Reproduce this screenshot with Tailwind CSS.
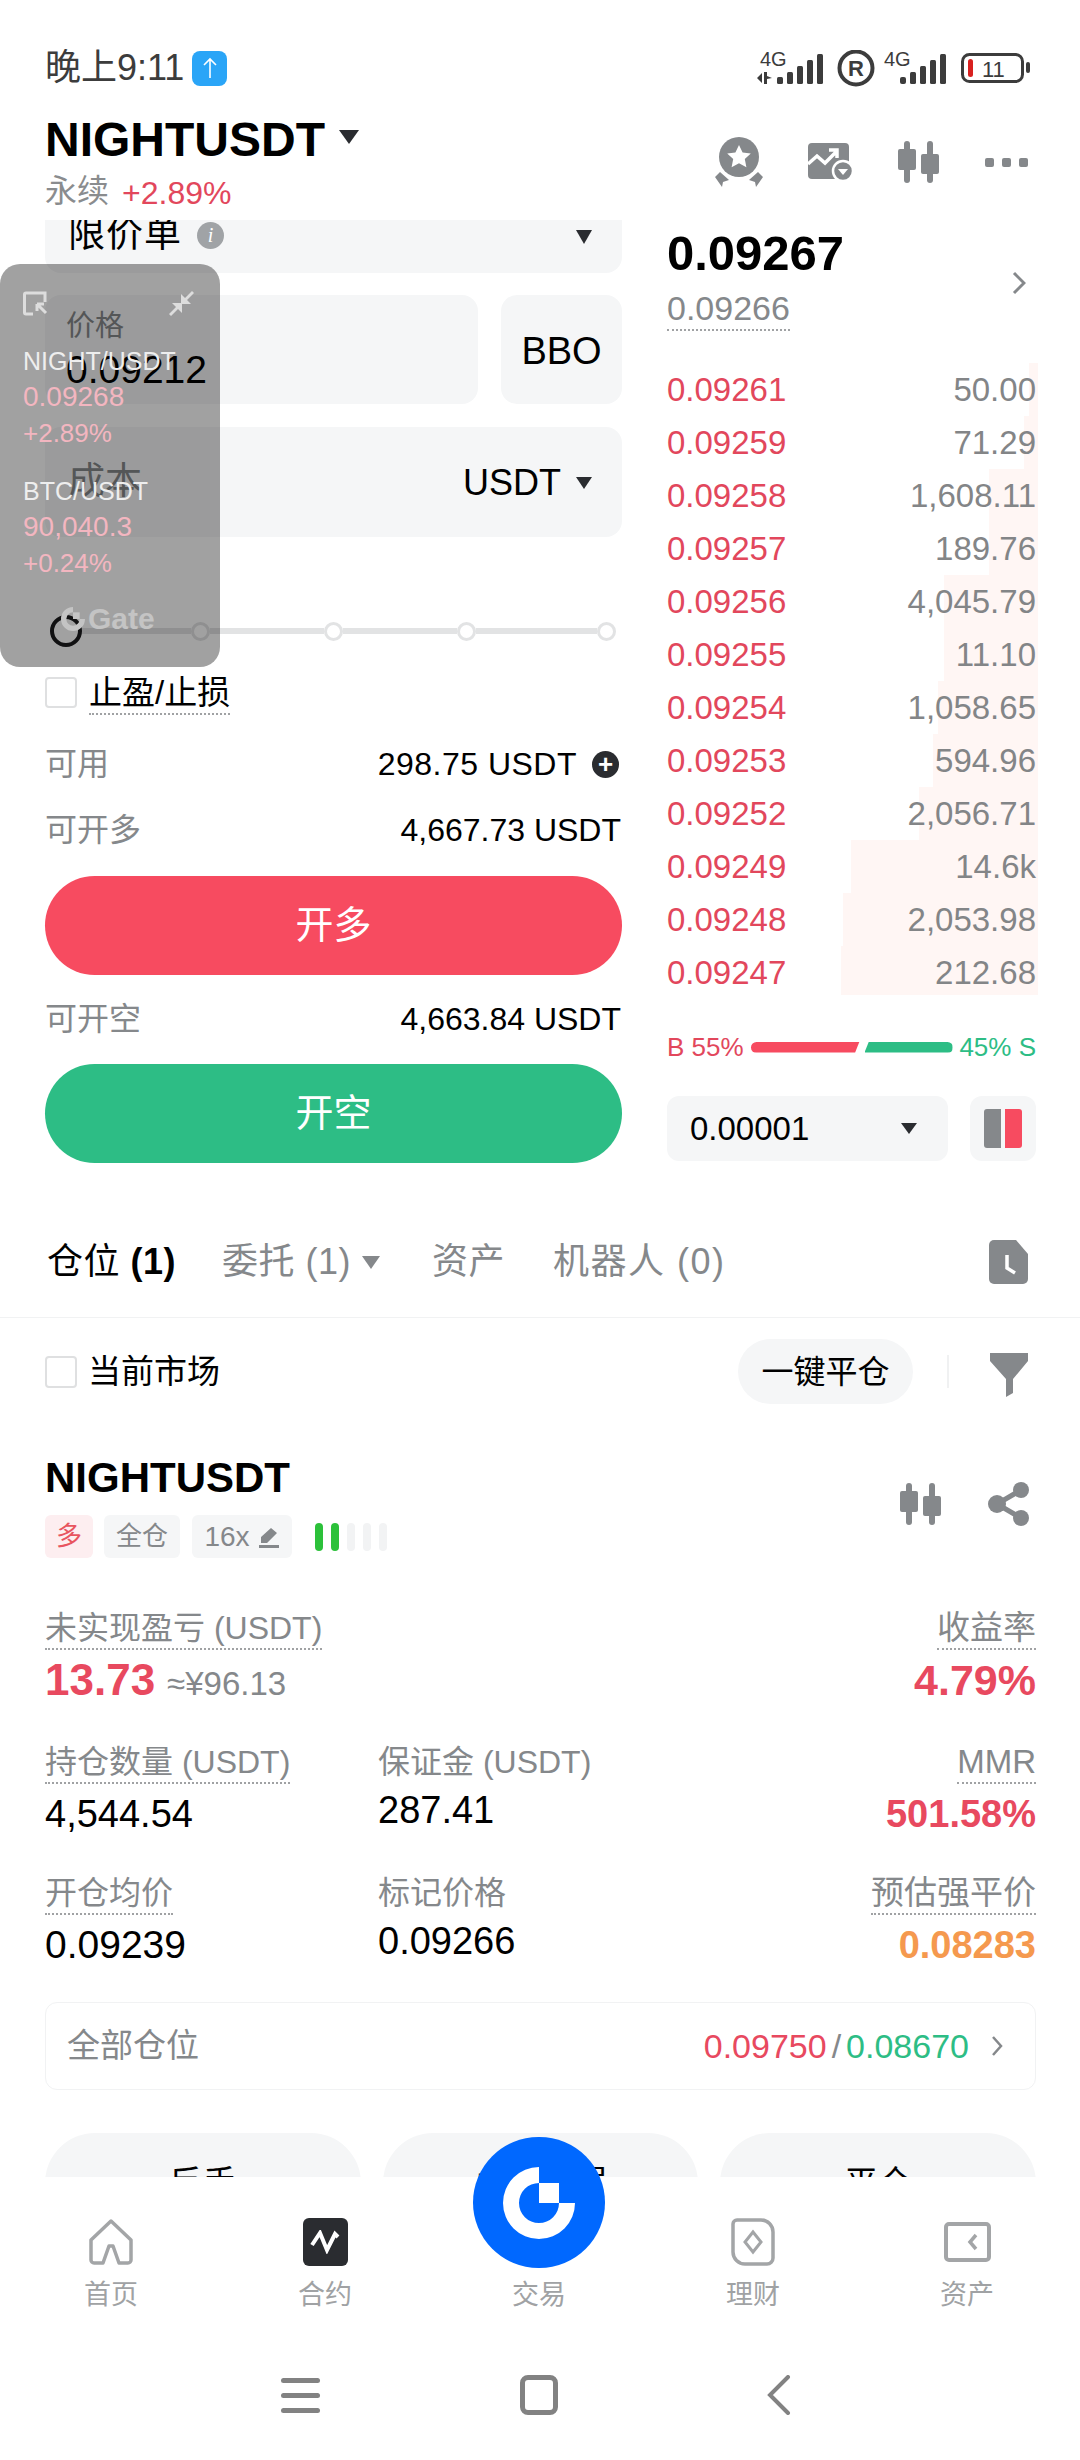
<!DOCTYPE html>
<html lang="zh-CN">
<head>
    <meta charset="UTF-8">
    <meta name="viewport" content="width=device-width, initial-scale=1.0">
    <title>NIGHTUSDT</title>
    <script src="https://cdn.jsdelivr.net/npm/@tailwindcss/browser@4"></script>
</head>
<body class="bg-white">
<div class="relative w-[1080px] h-[2460px] overflow-hidden bg-white text-black font-['Liberation_Sans','Noto_Sans_CJK_SC',sans-serif]">

    <div class="h-[2177px] overflow-hidden">
        <!-- status bar -->
        <div class="h-[110px] pt-[50px] pl-[45px] pr-[50px] flex justify-between items-start">
            <div class="flex items-center h-[36px] gap-[8px]">
                <span class="text-[36px] leading-[36px] text-[#3c3c3c]">晚上9:11</span>
                <span class="w-[35px] h-[35px] rounded-[8px] bg-[#2aa5f7] flex items-center justify-center">
                    <svg width="18" height="22" viewBox="0 0 18 22" fill="none" stroke="white" stroke-width="1.6"><path d="M9 21V2M3 8l6-6 6 6"/></svg>
                </span>
            </div>
            <svg width="276" height="40" viewBox="757 50 276 40" class="-mr-[3px]" fill="#3c3c3c">
                <text x="760" y="66" font-size="20" font-family="Liberation Sans">4G</text>
                <path d="M757 78l5-5v10zM764 72h3v4l5 2-5 1v5h-3z"/>
                <rect x="777" y="77" width="6" height="7" rx="1.5"/><rect x="787" y="72" width="6" height="12" rx="1.5"/><rect x="797" y="66" width="6" height="18" rx="1.5"/><rect x="807" y="60" width="6" height="24" rx="1.5"/><rect x="817" y="54" width="6" height="30" rx="1.5"/>
                <circle cx="856" cy="68" r="16.5" fill="none" stroke="#3c3c3c" stroke-width="4"/>
                <text x="848" y="76" font-size="22" font-weight="700" font-family="Liberation Sans">R</text>
                <text x="884" y="66" font-size="20" font-family="Liberation Sans">4G</text>
                <rect x="900" y="77" width="6" height="7" rx="2"/><rect x="910" y="72" width="6" height="12" rx="1.5"/><rect x="920" y="66" width="6" height="18" rx="1.5"/><rect x="930" y="60" width="6" height="24" rx="1.5"/><rect x="940" y="54" width="6" height="30" rx="1.5"/>
                <rect x="962.5" y="54.5" width="60" height="27" rx="7" fill="none" stroke="#3c3c3c" stroke-width="3"/>
                <rect x="968" y="59" width="5" height="18" rx="2.5" fill="#d8201f"/>
                <text x="982" y="77" font-size="22" font-family="Liberation Sans">11</text>
                <rect x="1026" y="62" width="4" height="11" rx="2"/>
            </svg>
        </div>

        <!-- header -->
        <div class="h-[110px] pl-[45px] pr-[50px] pb-[10px] flex justify-between items-center">
            <div>
                <div class="flex items-center h-[60px] mt-[1px]">
                    <span class="text-[48px] leading-[60px] font-bold">NIGHTUSDT</span>
                    <svg class="ml-[14px] -mt-[6px]" width="20" height="14" viewBox="0 0 20 14"><path d="M0 0h20L10 14z" fill="#2a2c30"/></svg>
                </div>
                <div class="flex items-center h-[40px] mt-[1px]">
                    <span class="text-[32px] leading-[40px] text-[#8a8c8e]">永续</span>
                    <span class="ml-[13px] mt-[3px] text-[32px] leading-[40px] text-[#e2475c]">+2.89%</span>
                </div>
            </div>
            <div class="flex items-center gap-[46px] mt-[4px] mr-[2px]">
                <svg width="48" height="50" viewBox="0 0 48 50" fill="#85888b">
                    <circle cx="24" cy="20" r="20"/>
                    <path d="M24 8l3.6 7.5 8.2 1-6 5.6 1.6 8.1-7.4-4-7.4 4 1.6-8.1-6-5.6 8.2-1z" fill="white"/>
                    <path d="M5 35l9 8-6 2-1 5-7-10zM43 35l-9 8 6 2 1 5 7-10z"/>
                </svg>
                <svg class="-ml-[1px]" width="45" height="38" viewBox="0 0 45 38">
                    <rect x="0" y="0" width="41" height="36" rx="4" fill="#85888b"/>
                    <path d="M0 21l9-8 8 7 11-11M21 7h8v8" fill="none" stroke="white" stroke-width="3.5"/>
                    <circle cx="35" cy="28" r="10" fill="#85888b" stroke="white" stroke-width="2.5"/>
                    <path d="M30 26h10l-5 6z" fill="white"/>
                </svg>
                <svg class="-ml-[1px]" width="41" height="42" viewBox="0 0 41 42" fill="#85888b">
                    <rect x="6" y="0" width="6" height="42" rx="3"/><rect x="0" y="8" width="18" height="21" rx="2"/>
                    <rect x="29" y="0" width="6" height="42" rx="3"/><rect x="23" y="13" width="18" height="20" rx="2"/>
                </svg>
                <div class="flex gap-[8px]">
                    <span class="w-[9px] h-[9px] rounded-[2px] bg-[#85888b]"></span>
                    <span class="w-[9px] h-[9px] rounded-[2px] bg-[#85888b]"></span>
                    <span class="w-[9px] h-[9px] rounded-[2px] bg-[#85888b]"></span>
                </div>
            </div>
        </div>

        <!-- trade area -->
        <div class="h-[970px] overflow-hidden flex pl-[45px]">
            <div class="w-[577px]">
                <div class="h-[53px] rounded-b-[16px] bg-[#f5f6f7] pl-[23px] pr-[30px] flex justify-between items-start">
                    <div class="flex items-center h-[30px]">
                        <span class="text-[37px] leading-[30px] tracking-[1px]">限价单</span>
                        <span class="ml-[15px] w-[27px] h-[27px] rounded-full bg-[#a0a3a6] text-white text-[20px] italic font-['Liberation_Serif',serif] flex items-center justify-center">i</span>
                    </div>
                    <svg class="mt-[10px]" width="16" height="14" viewBox="0 0 16 14"><path d="M0 0h16L8 14z" fill="#2a2c30"/></svg>
                </div>
                <div class="mt-[22px] flex gap-[23px]">
                    <div class="w-[433px] h-[109px] rounded-[16px] bg-[#f5f6f7] pl-[21px] pt-[11px]">
                        <div class="text-[29px] leading-[40px] text-[#85888b]">价格</div>
                        <div class="text-[39px] leading-[40px] mt-[4px]">0.09212</div>
                    </div>
                    <div class="flex-1 h-[109px] pt-[3px] rounded-[16px] bg-[#f5f6f7] flex items-center justify-center text-[38px]">BBO</div>
                </div>
                <div class="mt-[23px] h-[110px] rounded-[16px] bg-[#f5f6f7] pl-[23px] pr-[30px] flex justify-between items-center">
                    <span class="text-[37px] text-[#85888b]">成本</span>
                    <div class="flex items-center gap-[15px] pt-[2px]">
                        <span class="text-[36px]">USDT</span>
                        <svg width="16" height="12" viewBox="0 0 16 12"><path d="M0 0h16L8 12z" fill="#2a2c30"/></svg>
                    </div>
                </div>
                <!-- slider -->
                <div class="mt-[78px] h-[32px] ml-[5px] flex items-center">
                    <span class="w-[32px] h-[32px] rounded-full border-[4px] border-[#1b1b1d] bg-white shrink-0"></span>
                    <span class="w-[109px] h-[6px] bg-[#e2e3e4]"></span>
                    <span class="w-[19px] h-[19px] rounded-full border-[3px] border-[#e2e3e4] bg-white shrink-0"></span>
                    <span class="w-[114px] h-[6px] bg-[#e2e3e4]"></span>
                    <span class="w-[19px] h-[19px] rounded-full border-[3px] border-[#e2e3e4] bg-white shrink-0"></span>
                    <span class="w-[114px] h-[6px] bg-[#e2e3e4]"></span>
                    <span class="w-[19px] h-[19px] rounded-full border-[3px] border-[#e2e3e4] bg-white shrink-0"></span>
                    <span class="w-[121px] h-[6px] bg-[#e2e3e4]"></span>
                    <span class="w-[19px] h-[19px] rounded-full border-[3px] border-[#e2e3e4] bg-white shrink-0"></span>
                </div>
                <div class="mt-[30px] h-[31px] flex items-start">
                    <span class="w-[32px] h-[31px] rounded-[4px] border-2 border-[#dfe0e1]"></span>
                    <span class="ml-[12px] text-[33px] leading-[36px] -mt-[2px] border-b-2 border-dotted border-[#a0a2a4] pb-[2px]">止盈/止损</span>
                </div>
                <div class="mt-[36px] h-[40px] flex justify-between items-center">
                    <span class="text-[32px] text-[#85888b]">可用</span>
                    <div class="flex items-center gap-[15px] pr-[3px]">
                        <span class="text-[32px] tracking-[0.5px]">298.75 USDT</span>
                        <span class="w-[27px] h-[27px] rounded-full bg-[#2a2c30] relative flex items-center justify-center text-white text-[26px] font-bold leading-none">+</span>
                    </div>
                </div>
                <div class="mt-[26px] h-[40px] flex justify-between items-center">
                    <span class="text-[32px] text-[#85888b]">可开多</span>
                    <span class="text-[32px] pr-[1px]">4,667.73 USDT</span>
                </div>
                <div class="mt-[26px] h-[99px] rounded-full bg-[#f74b60] flex items-center justify-center text-white text-[38px]">开多</div>
                <div class="mt-[24px] h-[40px] flex justify-between items-center">
                    <span class="text-[32px] text-[#85888b]">可开空</span>
                    <span class="text-[32px] pr-[1px]">4,663.84 USDT</span>
                </div>
                <div class="mt-[25px] h-[99px] rounded-full bg-[#2dbd85] flex items-center justify-center text-white text-[38px]">开空</div>
            </div>

            <!-- order book -->
            <div class="ml-[45px] w-[369px]">
                <div class="mt-[7px] h-[105px] flex justify-between items-center">
                    <div>
                        <div class="text-[49px] leading-[50px] font-bold">0.09267</div>
                        <div class="inline-block mt-[9px] text-[34px] leading-[42px] text-[#85888b] border-b-2 border-dotted border-[#a0a2a4]">0.09266</div>
                    </div>
                    <svg class="mr-[10px] mt-[6px]" width="14" height="24" viewBox="0 0 14 24" fill="none" stroke="#85888b" stroke-width="3"><path d="M2 2l10 10L2 22"/></svg>
                </div>
                <div class="mt-[31px] text-[33px] leading-[53px]">
                    <div class="relative h-[53px] flex justify-between"><span class="absolute right-[-2px] inset-y-0 bg-[#fff6f4]" style="width:9px"></span><span class="relative text-[#e2475c]">0.09261</span><span class="relative text-[#838587]">50.00</span></div>
                    <div class="relative h-[53px] flex justify-between"><span class="absolute right-[-2px] inset-y-0 bg-[#fff6f4]" style="width:14px"></span><span class="relative text-[#e2475c]">0.09259</span><span class="relative text-[#838587]">71.29</span></div>
                    <div class="relative h-[53px] flex justify-between"><span class="absolute right-[-2px] inset-y-0 bg-[#fff6f4]" style="width:49px"></span><span class="relative text-[#e2475c]">0.09258</span><span class="relative text-[#838587]">1,608.11</span></div>
                    <div class="relative h-[53px] flex justify-between"><span class="absolute right-[-2px] inset-y-0 bg-[#fff6f4]" style="width:49px"></span><span class="relative text-[#e2475c]">0.09257</span><span class="relative text-[#838587]">189.76</span></div>
                    <div class="relative h-[53px] flex justify-between"><span class="absolute right-[-2px] inset-y-0 bg-[#fff6f4]" style="width:94px"></span><span class="relative text-[#e2475c]">0.09256</span><span class="relative text-[#838587]">4,045.79</span></div>
                    <div class="relative h-[53px] flex justify-between"><span class="absolute right-[-2px] inset-y-0 bg-[#fff6f4]" style="width:94px"></span><span class="relative text-[#e2475c]">0.09255</span><span class="relative text-[#838587]">11.10</span></div>
                    <div class="relative h-[53px] flex justify-between"><span class="absolute right-[-2px] inset-y-0 bg-[#fff6f4]" style="width:100px"></span><span class="relative text-[#e2475c]">0.09254</span><span class="relative text-[#838587]">1,058.65</span></div>
                    <div class="relative h-[53px] flex justify-between"><span class="absolute right-[-2px] inset-y-0 bg-[#fff6f4]" style="width:105px"></span><span class="relative text-[#e2475c]">0.09253</span><span class="relative text-[#838587]">594.96</span></div>
                    <div class="relative h-[53px] flex justify-between"><span class="absolute right-[-2px] inset-y-0 bg-[#fff6f4]" style="width:119px"></span><span class="relative text-[#e2475c]">0.09252</span><span class="relative text-[#838587]">2,056.71</span></div>
                    <div class="relative h-[53px] flex justify-between"><span class="absolute right-[-2px] inset-y-0 bg-[#fff6f4]" style="width:187px"></span><span class="relative text-[#e2475c]">0.09249</span><span class="relative text-[#838587]">14.6k</span></div>
                    <div class="relative h-[53px] flex justify-between"><span class="absolute right-[-2px] inset-y-0 bg-[#fff6f4]" style="width:195px"></span><span class="relative text-[#e2475c]">0.09248</span><span class="relative text-[#838587]">2,053.98</span></div>
                    <div class="relative h-[49px] flex justify-between"><span class="absolute right-[-2px] inset-y-0 bg-[#fff6f4]" style="width:197px"></span><span class="relative text-[#e2475c]">0.09247</span><span class="relative text-[#838587]">212.68</span></div>
                </div>
                <div class="mt-[37px] h-[30px] flex items-center justify-between text-[26px] leading-[30px]">
                    <span class="text-[#e2475c]">B 55%</span>
                    <div class="flex items-center gap-[5px]">
                        <span class="w-[109px] h-[11px] bg-[#f74b60] rounded-l-full [clip-path:polygon(0_0,100%_0,96%_100%,0_100%)]"></span>
                        <span class="w-[88px] h-[11px] bg-[#2dbd85] rounded-r-full [clip-path:polygon(5%_0,100%_0,100%_100%,0_100%)]"></span>
                    </div>
                    <span class="text-[#2dbd85]">45% S</span>
                </div>
                <div class="mt-[34px] flex justify-between">
                    <div class="w-[281px] h-[65px] rounded-[12px] bg-[#f5f6f7] pl-[23px] pr-[31px] flex items-center justify-between">
                        <span class="text-[33px]">0.00001</span>
                        <svg width="16" height="11" viewBox="0 0 16 11"><path d="M0 0h16L8 11z" fill="#2a2c30"/></svg>
                    </div>
                    <div class="w-[66px] h-[65px] rounded-[12px] bg-[#f5f6f7] flex items-center justify-center gap-[4px]">
                        <span class="w-[17px] h-[39px] rounded-l-[3px] bg-[#85888b]"></span>
                        <span class="w-[17px] h-[39px] rounded-r-[3px] bg-[#f74b60]"></span>
                    </div>
                </div>
            </div>
        </div>

        <!-- tabs -->
        <div class="h-[128px] pt-[17px] pl-[47px] pr-[52px] flex items-center justify-between border-b border-[#f1f2f3]">
            <div class="flex items-center text-[36px] text-[#85888b] tracking-[0.5px]">
                <span class="text-black">仓位 <span class="font-bold">(1)</span></span>
                <span class="ml-[46px]">委托 <span>(1)</span></span>
                <svg class="ml-[11px]" width="18" height="13" viewBox="0 0 18 13"><path d="M0 0h18L9 13z" fill="#85888b"/></svg>
                <span class="ml-[52px]">资产</span>
                <span class="ml-[48px] tracking-[1.5px]">机器人 <span>(0)</span></span>
            </div>
            <svg width="39" height="44" viewBox="0 0 39 44">
                <path d="M5 0h22l12 14v25a5 5 0 0 1-5 5H5a5 5 0 0 1-5-5V5a5 5 0 0 1 5-5z" fill="#85888b"/>
                <path d="M18 15v13l8 5" fill="none" stroke="white" stroke-width="3.5"/>
            </svg>
        </div>

        <div class="pl-[45px] pr-[44px]">
            <!-- filter row -->
            <div class="mt-[21px] h-[65px] flex items-center">
                <span class="w-[32px] h-[32px] rounded-[4px] border-2 border-[#dfe0e1]"></span>
                <span class="ml-[11px] text-[33px]">当前市场</span>
                <span class="ml-auto w-[175px] h-[65px] rounded-full bg-[#f5f6f7] flex items-center justify-center text-[32px]">一键平仓</span>
                <span class="ml-[34px] w-[2px] h-[33px] bg-[#f0f1f2]"></span>
                <svg class="ml-[41px] mr-[8px] mt-[6px]" width="38" height="44" viewBox="0 0 38 44"><path d="M0 0h38v8L23 26v14l-7 4V26L0 8z" fill="#85888b"/></svg>
            </div>

            <!-- position header -->
            <div class="mt-[49px] h-[105px] flex justify-between items-center">
                <div>
                    <div class="text-[42px] leading-[50px] font-bold">NIGHTUSDT</div>
                    <div class="mt-[12px] flex items-center h-[43px]">
                        <span class="w-[48px] h-[43px] rounded-[6px] bg-[#fdeef0] flex items-center justify-center text-[26px] text-[#e8555f]">多</span>
                        <span class="ml-[11px] w-[76px] h-[43px] rounded-[6px] bg-[#f5f6f7] flex items-center justify-center text-[26px] text-[#85888b]">全仓</span>
                        <span class="ml-[12px] w-[100px] h-[43px] rounded-[6px] bg-[#f5f6f7] flex items-center justify-center gap-[8px] text-[28px] text-[#85888b]">16x
                            <svg width="22" height="22" viewBox="0 0 22 22" fill="#85888b"><path d="M13 2l6 5-10 10H3v-6zM1 19h20v3H1z"/></svg>
                        </span>
                        <div class="ml-[23px] flex gap-[8px]">
                            <span class="w-[8px] h-[28px] rounded-full bg-[#2cc13a]"></span>
                            <span class="w-[8px] h-[28px] rounded-full bg-[#2cc13a]"></span>
                            <span class="w-[8px] h-[28px] rounded-full bg-[#f2f3f4]"></span>
                            <span class="w-[8px] h-[28px] rounded-full bg-[#f2f3f4]"></span>
                            <span class="w-[8px] h-[28px] rounded-full bg-[#f2f3f4]"></span>
                        </div>
                    </div>
                </div>
                <div class="flex items-center gap-[46px] -mt-[4px] pr-[6px]">
                    <svg class="-ml-[2px]" width="43" height="42" viewBox="0 0 41 42" fill="#85888b">
                        <rect x="6" y="0" width="6" height="42" rx="3"/><rect x="0" y="8" width="18" height="21" rx="2"/>
                        <rect x="29" y="0" width="6" height="42" rx="3"/><rect x="23" y="13" width="18" height="20" rx="2"/>
                    </svg>
                    <svg width="42" height="44" viewBox="0 0 42 44" fill="#85888b">
                        <path d="M33 8L9 22l24 14" fill="none" stroke="#85888b" stroke-width="5"/>
                        <circle cx="33" cy="8" r="8"/><circle cx="9" cy="22" r="9"/><circle cx="33" cy="36" r="8"/>
                    </svg>
                </div>
            </div>

            <!-- position stats -->
            <div class="mt-[50px] grid grid-cols-[333px_1fr_auto] grid-rows-[134px_131px_129px]">
                <div class="col-span-2">
                    <div class="inline-block text-[32px] leading-[40px] text-[#85888b] border-b-2 border-dotted border-[#a0a2a4]">未实现盈亏 (USDT)</div>
                    <div class="leading-[60px] flex items-baseline"><span class="text-[44px] font-bold text-[#e8495f]">13.73</span><span class="ml-[12px] text-[33px] text-[#85888b]">≈¥96.13</span></div>
                </div>
                <div class="text-right">
                    <div class="inline-block text-[33px] leading-[40px] text-[#85888b] border-b-2 border-dotted border-[#a0a2a4]">收益率</div>
                    <div class="leading-[60px] text-[43px] font-bold text-[#e8495f]">4.79%</div>
                </div>
                <div>
                    <div class="inline-block text-[32px] leading-[40px] text-[#85888b] border-b-2 border-dotted border-[#a0a2a4]">持仓数量 (USDT)</div>
                    <div class="leading-[60px] text-[38px]">4,544.54</div>
                </div>
                <div>
                    <div class="text-[32px] leading-[40px] text-[#85888b]">保证金 (USDT)</div>
                    <div class="leading-[56px] text-[38px]">287.41</div>
                </div>
                <div class="text-right">
                    <div class="inline-block text-[33px] leading-[40px] text-[#85888b] border-b-2 border-dotted border-[#a0a2a4]">MMR</div>
                    <div class="leading-[60px] text-[38px] font-bold text-[#e8495f]">501.58%</div>
                </div>
                <div>
                    <div class="inline-block text-[32px] leading-[40px] text-[#85888b] border-b-2 border-dotted border-[#a0a2a4]">开仓均价</div>
                    <div class="leading-[60px] text-[39px]">0.09239</div>
                </div>
                <div>
                    <div class="text-[32px] leading-[40px] text-[#85888b]">标记价格</div>
                    <div class="leading-[56px] text-[38px]">0.09266</div>
                </div>
                <div class="text-right">
                    <div class="inline-block text-[33px] leading-[40px] text-[#85888b] border-b-2 border-dotted border-[#a0a2a4]">预估强平价</div>
                    <div class="leading-[60px] text-[38px] font-bold text-[#f5994e]">0.08283</div>
                </div>
            </div>

            <div class="h-[88px] rounded-[12px] border border-[#f1f2f3] pl-[21px] pr-[32px] flex items-center justify-between">
                <span class="text-[33px] text-[#85888b]">全部仓位</span>
                <div class="flex items-center text-[34px]">
                    <span class="text-[#e8495f]">0.09750</span>
                    <span class="mx-[5px] text-[#85888b]">/</span>
                    <span class="text-[#2dbd85]">0.08670</span>
                    <svg class="ml-[22px]" width="12" height="22" viewBox="0 0 12 22" fill="none" stroke="#85888b" stroke-width="2.5"><path d="M2 2l8 9-8 9"/></svg>
                </div>
            </div>

            <div class="mt-[43px] grid grid-cols-3 gap-[22px]">
                <div class="h-[100px] rounded-full bg-[#f5f6f7] flex items-center justify-center text-[34px]">反手</div>
                <div class="h-[100px] rounded-full bg-[#f5f6f7] flex items-center justify-center text-[34px]">止盈止损</div>
                <div class="h-[100px] rounded-full bg-[#f5f6f7] flex items-center justify-center text-[34px]">平仓</div>
            </div>
        </div>
    </div>

    <!-- bottom nav -->
    <div class="relative h-[283px]">
        <div class="absolute left-[473px] -top-[40px] w-[132px] h-[131px] rounded-full bg-[#0068ff] flex items-center justify-center">
            <svg width="72" height="72" viewBox="0 0 72 72" fill="white">
                <path d="M36 0A36 36 0 1 0 72 36H56A20 20 0 1 1 36 16Z"/>
                <rect x="36" y="16" width="20" height="20"/>
            </svg>
        </div>
        <div class="pt-[41px] ml-[4px] grid grid-cols-[repeat(5,214px)] text-[27px] leading-[30px] text-[#a0a2a4]">
            <div class="flex flex-col items-center">
                <svg width="44" height="48" viewBox="0 0 44 48" fill="none" stroke="#a3a5a7" stroke-width="3.5"><path d="M22 3L2 22v20a3 3 0 0 0 3 3h9l6-17h4l6 17h9a3 3 0 0 0 3-3V22z" stroke-linejoin="round"/></svg>
                <span class="mt-[14px]">首页</span>
            </div>
            <div class="flex flex-col items-center">
                <div class="w-[45px] h-[48px] rounded-[6px] bg-[#2a2c30] flex items-center justify-center">
                    <svg width="30" height="24" viewBox="0 0 30 24" fill="none" stroke="white" stroke-width="4"><path d="M2 15l8-12 7 17 8-16 3 3"/></svg>
                </div>
                <span class="mt-[14px]">合约</span>
            </div>
            <div class="flex flex-col items-center">
                <div class="h-[48px]"></div>
                <span class="mt-[14px]">交易</span>
            </div>
            <div class="flex flex-col items-center">
                <svg width="44" height="48" viewBox="0 0 44 48" fill="none" stroke="#a3a5a7" stroke-width="3.5"><path d="M6 2h24a12 12 0 0 1 12 12v26a6 6 0 0 1-6 6H14A12 12 0 0 1 2 34V6a4 4 0 0 1 4-4z"/><path d="M22 14l8 10-8 10-8-10z" stroke-width="3"/></svg>
                <span class="mt-[14px]">理财</span>
            </div>
            <div class="flex flex-col items-center">
                <svg class="mt-[4px] mb-[4px]" width="47" height="40" viewBox="0 0 47 40" fill="none" stroke="#a3a5a7" stroke-width="4"><rect x="2" y="2" width="43" height="36" rx="3"/><path d="M32 13l-6 7 6 7" stroke-width="3.5"/></svg>
                <span class="mt-[14px]">资产</span>
            </div>
        </div>
        <div class="mt-[65px] pl-[281px] flex items-center">
            <div class="w-[39px] flex flex-col gap-[10px]">
                <span class="h-[5px] rounded-full bg-[#828282]"></span>
                <span class="h-[5px] rounded-full bg-[#828282]"></span>
                <span class="h-[5px] rounded-full bg-[#828282]"></span>
            </div>
            <span class="ml-[200px] w-[38px] h-[40px] rounded-[8px] border-[5px] border-[#828282]"></span>
            <svg class="ml-[209px]" width="24" height="40" viewBox="0 0 24 40" fill="none" stroke="#828282" stroke-width="4" stroke-linecap="round"><path d="M21 2L3 20l18 18"/></svg>
        </div>
    </div>

    <!-- floating ticker widget -->
    <div class="absolute left-0 top-[264px] w-[220px] h-[403px] rounded-[20px] bg-black/[.37] pl-[23px] text-[25px] leading-[30px]">
        <div class="pt-[27px] pr-[26px] flex justify-between">
            <svg width="25" height="25" viewBox="0 0 25 25" fill="none" stroke="#dddddd" stroke-width="3"><path d="M10 23H3a1.5 1.5 0 0 1-1.5-1.5v-18A1.5 1.5 0 0 1 3 2h19v9M14 13l9 9M14 13v7M14 13h7"/></svg>
            <svg width="25" height="25" viewBox="0 0 25 25" fill="#dddddd"><path d="M23 0l2 2-7 7 4 4H12V3l4 4zM2 25l-2-2 7-7-4-4h10v10l-4-4z"/></svg>
        </div>
        <div class="mt-[30px] text-[#eeeeee]">NIGHT/USDT</div>
        <div class="mt-[6px] text-[28px] text-[#f3b6c0]">0.09268</div>
        <div class="mt-[6px] text-[26px] text-[#f3b6c0]">+2.89%</div>
        <div class="mt-[28px] text-[#eeeeee]">BTC/USDT</div>
        <div class="mt-[6px] text-[28px] text-[#f3b6c0]">90,040.3</div>
        <div class="mt-[6px] text-[26px] text-[#f3b6c0]">+0.24%</div>
        <div class="mt-[26px] ml-[38px] flex items-center gap-[3px] text-[#c4c4c4] text-[30px] font-bold">
            <svg width="24" height="24" viewBox="0 0 72 72" fill="#c4c4c4"><path d="M36 0A36 36 0 1 0 72 36H56A20 20 0 1 1 36 16Z"/><rect x="36" y="16" width="20" height="20"/></svg>
            <span>Gate</span>
        </div>
    </div>
</div>
</body>
</html>
